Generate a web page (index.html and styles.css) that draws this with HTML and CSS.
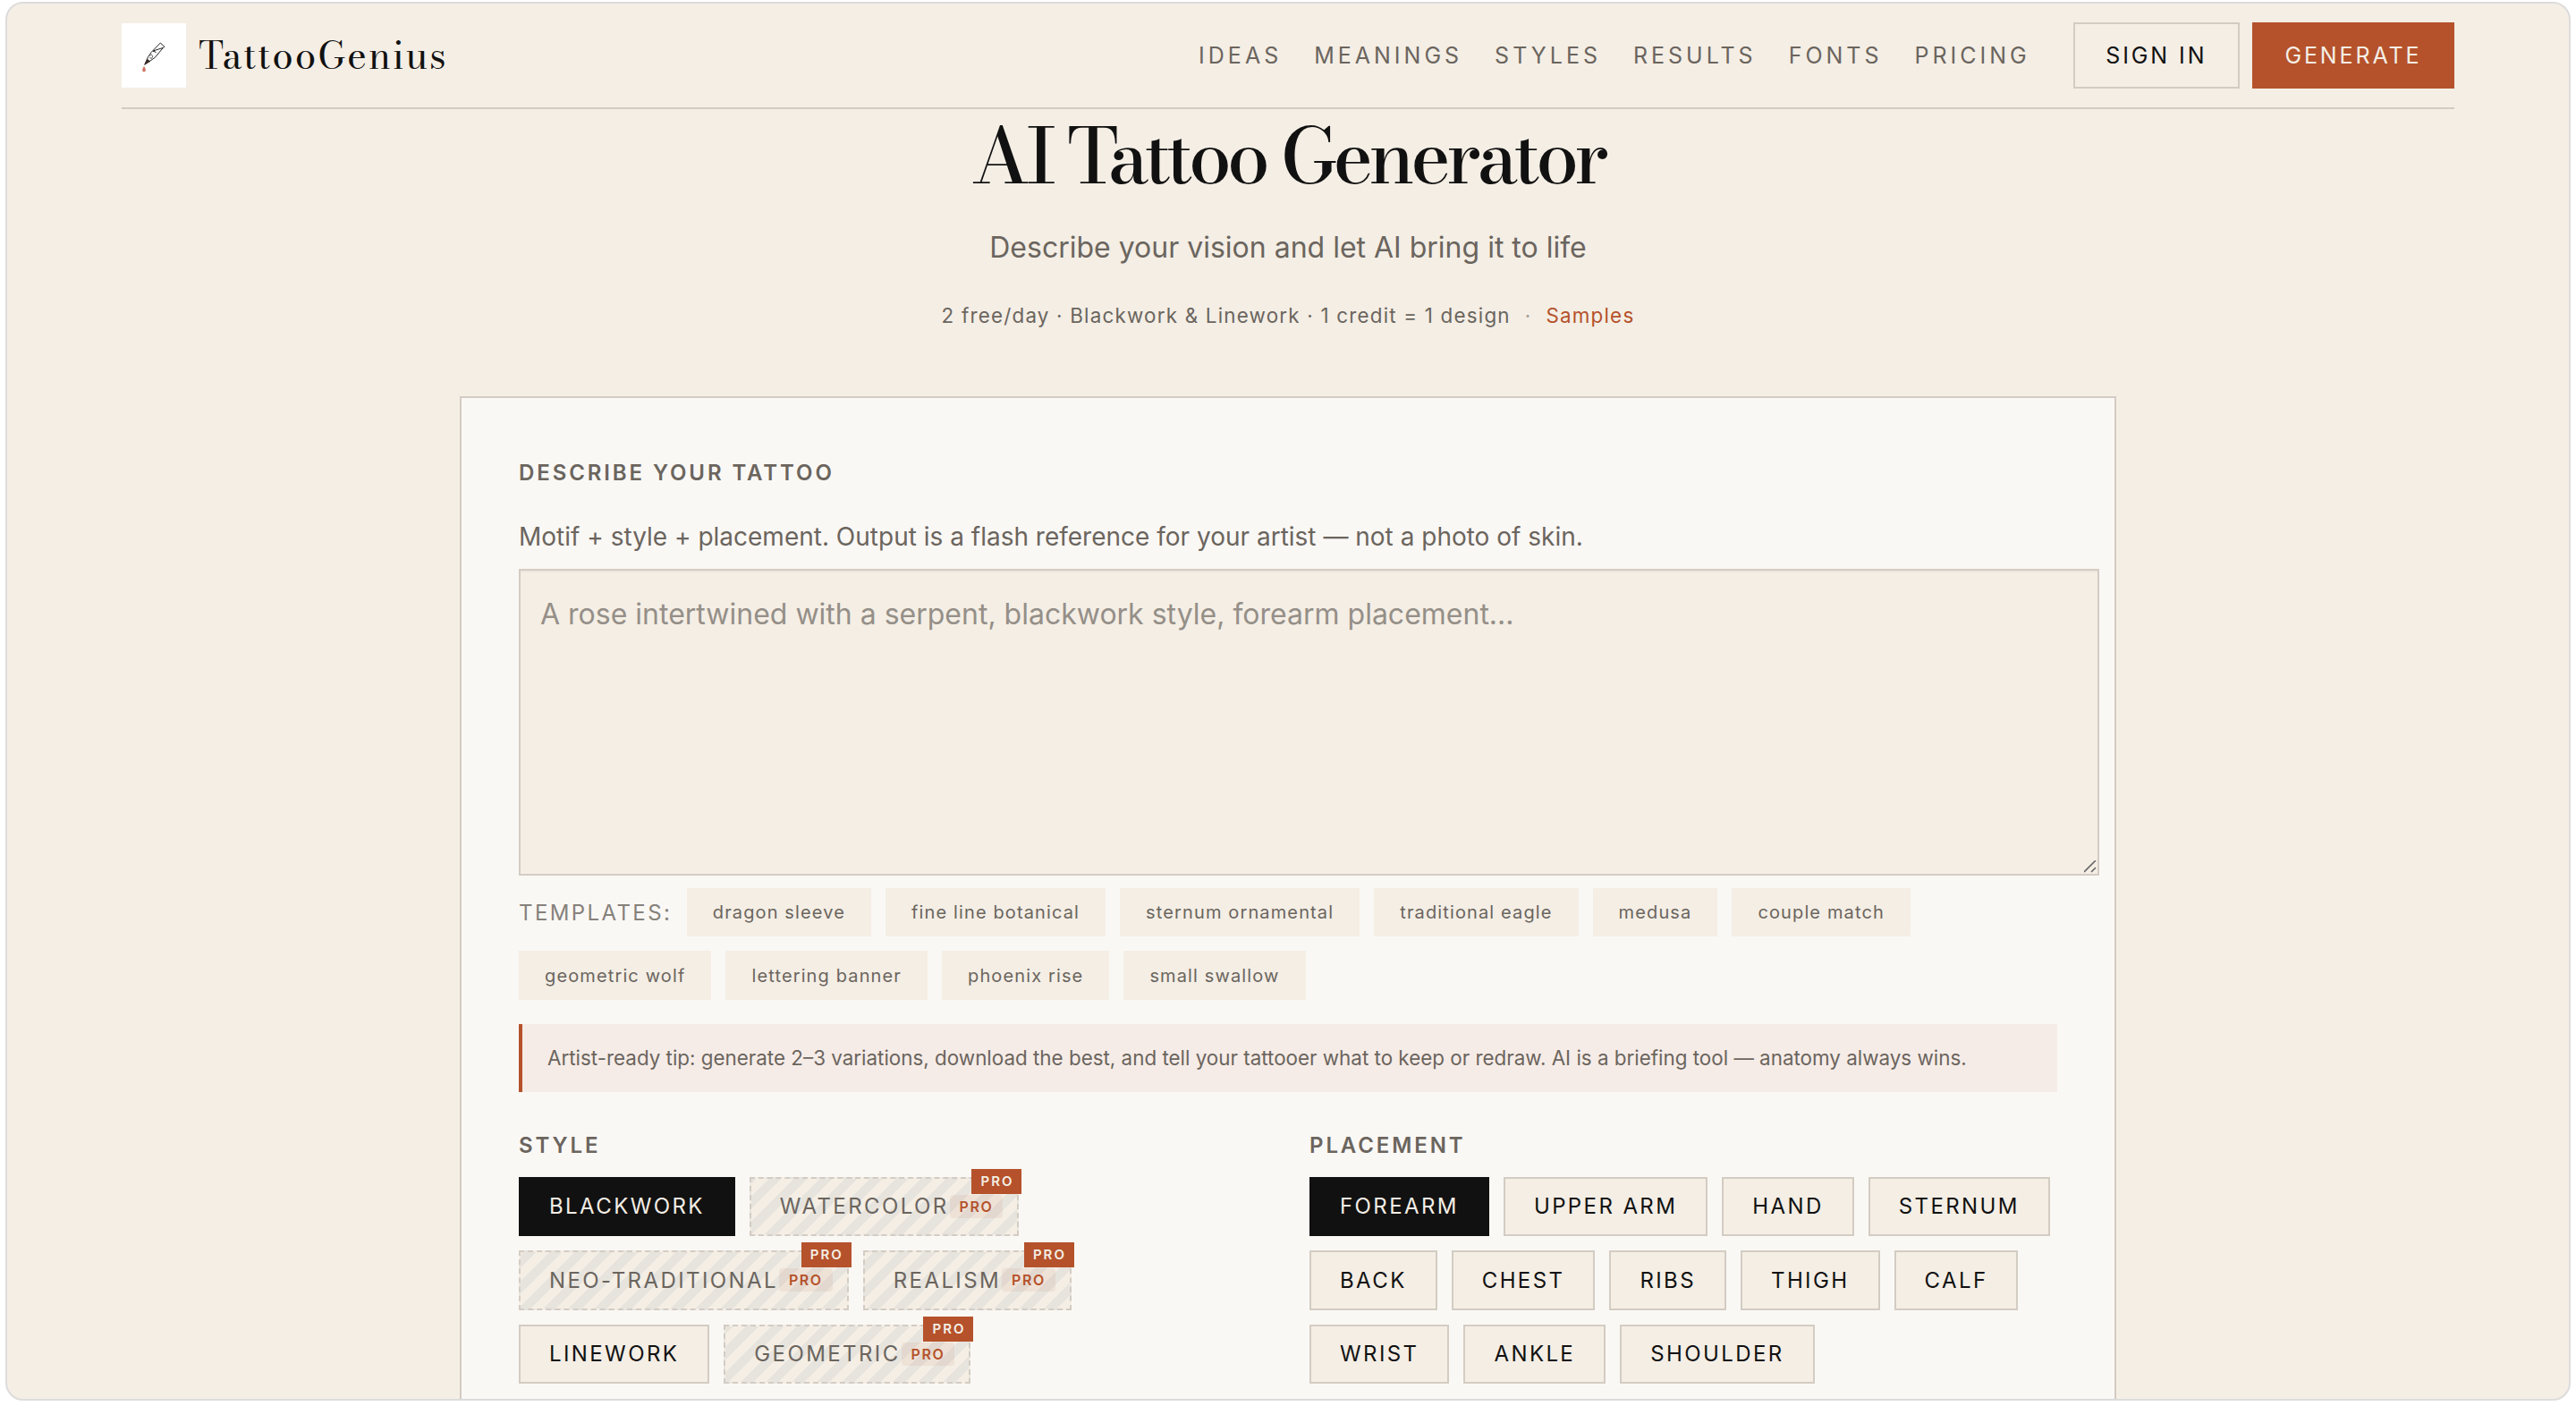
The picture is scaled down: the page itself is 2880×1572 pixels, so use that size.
FILE: index.html
```html
<!DOCTYPE html>
<html lang="en">

<head>
	<meta charset="UTF-8">
	<title>AI Tattoo Generator - TattooGenius</title>
	<link rel="stylesheet" href="styles.css">
</head>

<body>
	<div class="window">
		<header class="header">
			<a class="brand">
				<svg class="logo" viewBox="0 0 72 72" fill="none">
					<rect width="72" height="72" fill="#fff" />
					<path d="M43.300 22L33.300 32.300l-3.600 5-4 9 4.300-3 7.300-5L46.700 27M43.300 22l4.700 4.300-1.300 1M35 31l11-3.500M35 31l3.500 1.500" stroke="#222" stroke-width="1" />
					<path d="M31.500 36.500c1-2.500 3.500-1 3 1s-2.500 2.500-3 .5" stroke="#222" stroke-width=".8" />
					<path d="M25.700 46.300l3-6.500 3.500 3z" fill="#3a2a24" />
					<path d="M25 48c-2.500 3.500-2.300 6.300 0 6.300s2.500-2.800 0-6.300z" fill="#cf7261" />
				</svg>
				<span class="brand-name">TattooGenius</span>
			</a>
			<nav class="nav">
				<a>Ideas</a>
				<a>Meanings</a>
				<a>Styles</a>
				<a>Results</a>
				<a>Fonts</a>
				<a>Pricing</a>
			</nav>
			<button class="btn">Sign in</button>
			<button class="btn btn-primary">Generate</button>
		</header>

		<section class="hero">
			<h1>AI Tattoo Generator</h1>
			<p class="subtitle">Describe your vision and let AI bring it to life</p>
			<p class="meta">2 free/day · Blackwork &amp; Linework · 1 credit = 1 design<span class="dot">·</span><a>Samples</a></p>
		</section>

		<main class="card">
			<label class="label" for="prompt">Describe your tattoo</label>
			<p class="hint">Motif + style + placement. Output is a flash reference for your artist — not a photo of skin.</p>
			<textarea id="prompt" class="prompt" placeholder="A rose intertwined with a serpent, blackwork style, forearm placement..."></textarea>

			<div class="templates">
				<span class="templates-label">Templates:</span>
				<button class="template">dragon sleeve</button>
				<button class="template">fine line botanical</button>
				<button class="template">sternum ornamental</button>
				<button class="template">traditional eagle</button>
				<button class="template">medusa</button>
				<button class="template">couple match</button>
				<button class="template">geometric wolf</button>
				<button class="template">lettering banner</button>
				<button class="template">phoenix rise</button>
				<button class="template">small swallow</button>
			</div>

			<p class="tip">Artist-ready tip: generate 2–3 variations, download the best, and tell your tattooer what to keep or redraw. AI is a briefing tool — anatomy always wins.</p>

			<div class="options">
				<div class="group">
					<span class="label">Style</span>
					<div class="chips">
						<button class="chip active">Blackwork</button>
						<button class="chip locked">Watercolor<span class="pro">PRO</span></button>
						<button class="chip locked">Neo-Traditional<span class="pro">PRO</span></button>
						<button class="chip locked">Realism<span class="pro">PRO</span></button>
						<button class="chip">Linework</button>
						<button class="chip locked">Geometric<span class="pro">PRO</span></button>
					</div>
				</div>
				<div class="group">
					<span class="label">Placement</span>
					<div class="chips">
						<button class="chip active">Forearm</button>
						<button class="chip">Upper Arm</button>
						<button class="chip">Hand</button>
						<button class="chip">Sternum</button>
						<button class="chip">Back</button>
						<button class="chip">Chest</button>
						<button class="chip">Ribs</button>
						<button class="chip">Thigh</button>
						<button class="chip">Calf</button>
						<button class="chip">Wrist</button>
						<button class="chip">Ankle</button>
						<button class="chip">Shoulder</button>
					</div>
				</div>
			</div>
		</main>
	</div>
</body>

</html>
```
FILE: styles.css
```css
body {
  margin: 0;
  padding: 2px 6px 0;
  background: #fff;
  font-family: Inter, "Liberation Sans", sans-serif;
  color: #6b655e;
}

button {
  font-family: inherit;
  border-radius: 0;
  cursor: pointer;
}

.window {
  box-sizing: border-box;
  width: 2868px;
  height: 1564px;
  padding: 0 128px;
  overflow: hidden;
  border: 2px solid #dcdcdc;
  border-radius: 20px;
  background: #f4eee5;
}

/* header */
.header {
  display: flex;
  align-items: center;
  box-sizing: border-box;
  height: 118px;
  border-bottom: 2px solid #d3ccc3;
}

.brand {
  display: flex;
  align-items: center;
  gap: 14px;
  margin-right: auto;
}

.logo {
  width: 72px;
  height: 72px;
}

.brand-name {
  font-family: "Bodoni Moda", "Liberation Serif", serif;
  font-size: 42px;
  line-height: 72px;
  letter-spacing: 1.9px;
  color: #111;
}

.nav {
  display: flex;
  gap: 36px;
  margin-right: 48px;
  font-size: 25px;
  letter-spacing: 4px;
  text-transform: uppercase;
}

.btn {
  box-sizing: border-box;
  height: 74px;
  padding: 0 34.5px;
  border: 2px solid #d3ccc3;
  background: transparent;
  color: #111;
  font-size: 25px;
  letter-spacing: 2.9px;
  text-transform: uppercase;
}

.btn-primary {
  margin-left: 14px;
  border-color: #b5522b;
  background: #b5522b;
  color: #f4eee5;
}

/* hero */
.hero {
  height: 321px;
  text-align: center;
}

.hero h1 {
  margin: 0;
  padding-top: 2px;
  font-family: "Bodoni Moda", "Liberation Serif", serif;
  font-size: 85px;
  line-height: 100px;
  font-weight: 500;
  letter-spacing: -4.7px;
  color: #111;
}

.subtitle {
  margin: 29px 0 0;
  font-size: 32px;
  line-height: 48px;
}

.meta {
  margin: 34px 0 0;
  font-size: 22.4px;
  line-height: 36px;
  letter-spacing: 1.2px;
}

.meta .dot {
  margin: 0 16px;
  opacity: 0.6;
}

.meta a {
  color: #b5522b;
}

/* generator card */
.card {
  box-sizing: border-box;
  width: 1852px;
  height: 1300px;
  margin: 0 auto;
  padding: 64px;
  border: 2px solid #d3ccc3;
  background: #faf8f5;
}

.label {
  display: block;
  font-size: 24px;
  line-height: 40px;
  font-weight: 600;
  letter-spacing: 2.9px;
  text-transform: uppercase;
}

.hint {
  margin: 30px 0 15px;
  font-size: 28px;
  line-height: 42px;
}

.prompt {
  display: block;
  box-sizing: border-box;
  width: 1767px;
  height: 343px;
  padding: 25px 22px;
  border: 2px solid #d3ccc3;
  border-radius: 0;
  background: #f4eee5;
  box-shadow: inset 0 2px 0 rgba(0, 0, 0, 0.03);
  font-family: inherit;
  font-size: 32px;
  line-height: 48px;
  resize: both;
}

.prompt::placeholder {
  color: #958f88;
}

.prompt::-webkit-resizer {
  background: url("data:image/svg+xml,%3Csvg xmlns='http://www.w3.org/2000/svg' width='15' height='15'%3E%3Cpath d='M0 13L13 0M8 13l5-5' stroke='%23666' stroke-width='1.6'/%3E%3C/svg%3E") no-repeat;
}

.templates {
  display: flex;
  flex-wrap: wrap;
  align-items: center;
  gap: 16px;
  margin-top: 14px;
}

.templates-label {
  margin-right: 0.5px;
  font-size: 24px;
  letter-spacing: 2.4px;
  text-transform: uppercase;
  color: #86817b;
}

.template {
  height: 54.4px;
  padding: 0 29px;
  border: 0;
  background: #f4eee5;
  color: #6b655e;
  font-size: 20px;
  letter-spacing: 1.13px;
}

.tip {
  box-sizing: border-box;
  height: 76px;
  margin: 27px 0 0;
  padding-left: 28px;
  border-left: 4px solid #b5522b;
  background: #f6ece7;
  font-size: 22.4px;
  line-height: 76px;
}

.options {
  display: grid;
  grid-template-columns: 836px 836px;
  gap: 48px;
  margin-top: 40px;
}

.chips {
  display: flex;
  flex-wrap: wrap;
  gap: 16px;
  margin-top: 15px;
}

.chip {
  position: relative;
  display: flex;
  align-items: center;
  box-sizing: border-box;
  height: 66.4px;
  padding: 0 32px;
  border: 2px solid #d3ccc3;
  background: #f4eee5;
  color: #111;
  font-size: 24px;
  letter-spacing: 2.4px;
  text-transform: uppercase;
}

.chip.active {
  border-color: #111;
  background: #111;
  color: #f4eee5;
}

.chip.locked {
  padding-right: 16px;
  border-style: dashed;
  background: repeating-linear-gradient(-45deg, #f4eee5 0 10px, #e7e4de 10px 20px);
  color: #6b655e;
}

/* corner badge on paid styles */
.chip.locked::after {
  content: "PRO";
  position: absolute;
  top: -11px;
  right: -5px;
  padding: 0 9px 0 10px;
  background: #b5522b;
  color: #f4eee5;
  font-size: 15px;
  line-height: 28px;
  font-weight: 600;
  letter-spacing: 2px;
}

.pro {
  margin-left: 1px;
  padding: 0 11px;
  border-radius: 4px;
  background: rgba(181, 82, 43, 0.08);
  color: #b5522b;
  font-size: 16px;
  line-height: 26px;
  font-weight: 600;
  letter-spacing: 1.6px;
}
```
